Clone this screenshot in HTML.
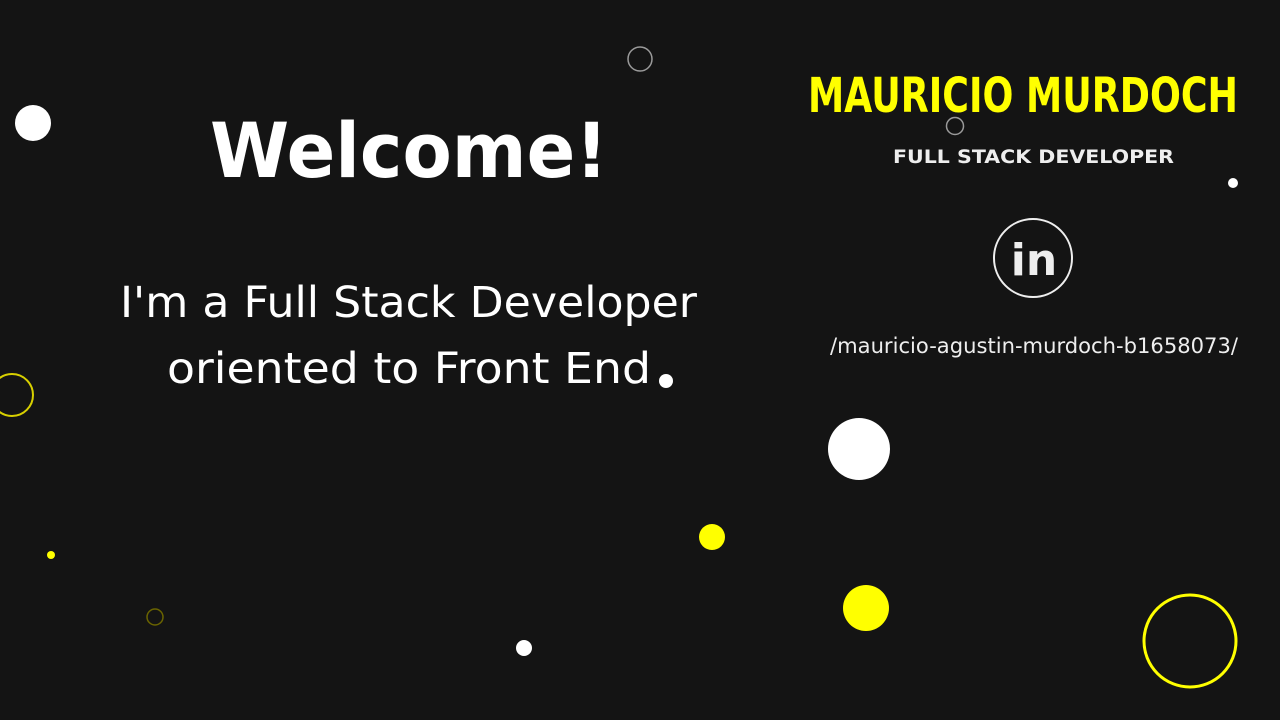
<!DOCTYPE html>
<html><head><meta charset="utf-8"><style>
html,body{margin:0;padding:0;background:#141414;width:1280px;height:720px;overflow:hidden}
svg{display:block}
</style></head><body>
<svg width="1280" height="720" viewBox="0 0 1280 720" xmlns="http://www.w3.org/2000/svg">
<rect width="1280" height="720" fill="#141414"/>
<circle cx="33" cy="123" r="18" fill="#fff"/>
<circle cx="640" cy="59" r="12" fill="none" stroke="#9a9a9a" stroke-width="1.5"/>
<circle cx="955" cy="126" r="8.5" fill="none" stroke="#9a9a9a" stroke-width="1.5"/>
<circle cx="1233" cy="183" r="5" fill="#fff"/>
<circle cx="12" cy="395" r="21" fill="none" stroke="#d8d000" stroke-width="2"/>
<circle cx="666" cy="381" r="7" fill="#fff"/>
<circle cx="859" cy="449" r="31" fill="#fff"/>
<circle cx="712" cy="537" r="13" fill="#ffff00"/>
<circle cx="866" cy="608" r="23" fill="#ffff00"/>
<circle cx="51" cy="555" r="4" fill="#ffff00"/>
<circle cx="155" cy="617" r="8" fill="none" stroke="#6a6400" stroke-width="1.5"/>
<circle cx="524" cy="648" r="8" fill="#fff"/>
<circle cx="1190" cy="641" r="46" fill="none" stroke="#ffff00" stroke-width="3"/>

<text x="210" y="177" font-family="DejaVu Sans, sans-serif" font-weight="bold" font-size="76" fill="#fff" textLength="398" lengthAdjust="spacingAndGlyphs">Welcome!</text>
<text x="120" y="317" font-family="DejaVu Sans, Liberation Sans, sans-serif" font-size="43" fill="#fff" textLength="577" lengthAdjust="spacingAndGlyphs">I'm a Full Stack Developer</text>
<text x="167" y="383" font-family="DejaVu Sans, Liberation Sans, sans-serif" font-size="43" fill="#fff" textLength="484" lengthAdjust="spacingAndGlyphs">oriented to Front End</text>

<text x="808" y="112" font-family="DejaVu Sans, sans-serif" font-weight="bold" font-size="48" fill="#ffff00" textLength="430" lengthAdjust="spacingAndGlyphs">MAURICIO MURDOCH</text>
<text x="893" y="163" font-family="DejaVu Sans, sans-serif" font-weight="bold" font-size="19" fill="#eee" textLength="281" lengthAdjust="spacingAndGlyphs">FULL STACK DEVELOPER</text>

<circle cx="1033" cy="258" r="39" fill="none" stroke="#eee" stroke-width="2"/>
<text x="1034" y="275" text-anchor="middle" font-family="DejaVu Sans, sans-serif" font-weight="bold" font-size="44" fill="#eee">in</text>

<text x="830" y="353" font-family="DejaVu Sans, sans-serif" font-size="21" fill="#eee" textLength="408" lengthAdjust="spacingAndGlyphs">/mauricio-agustin-murdoch-b1658073/</text>
</svg>
</body></html>
